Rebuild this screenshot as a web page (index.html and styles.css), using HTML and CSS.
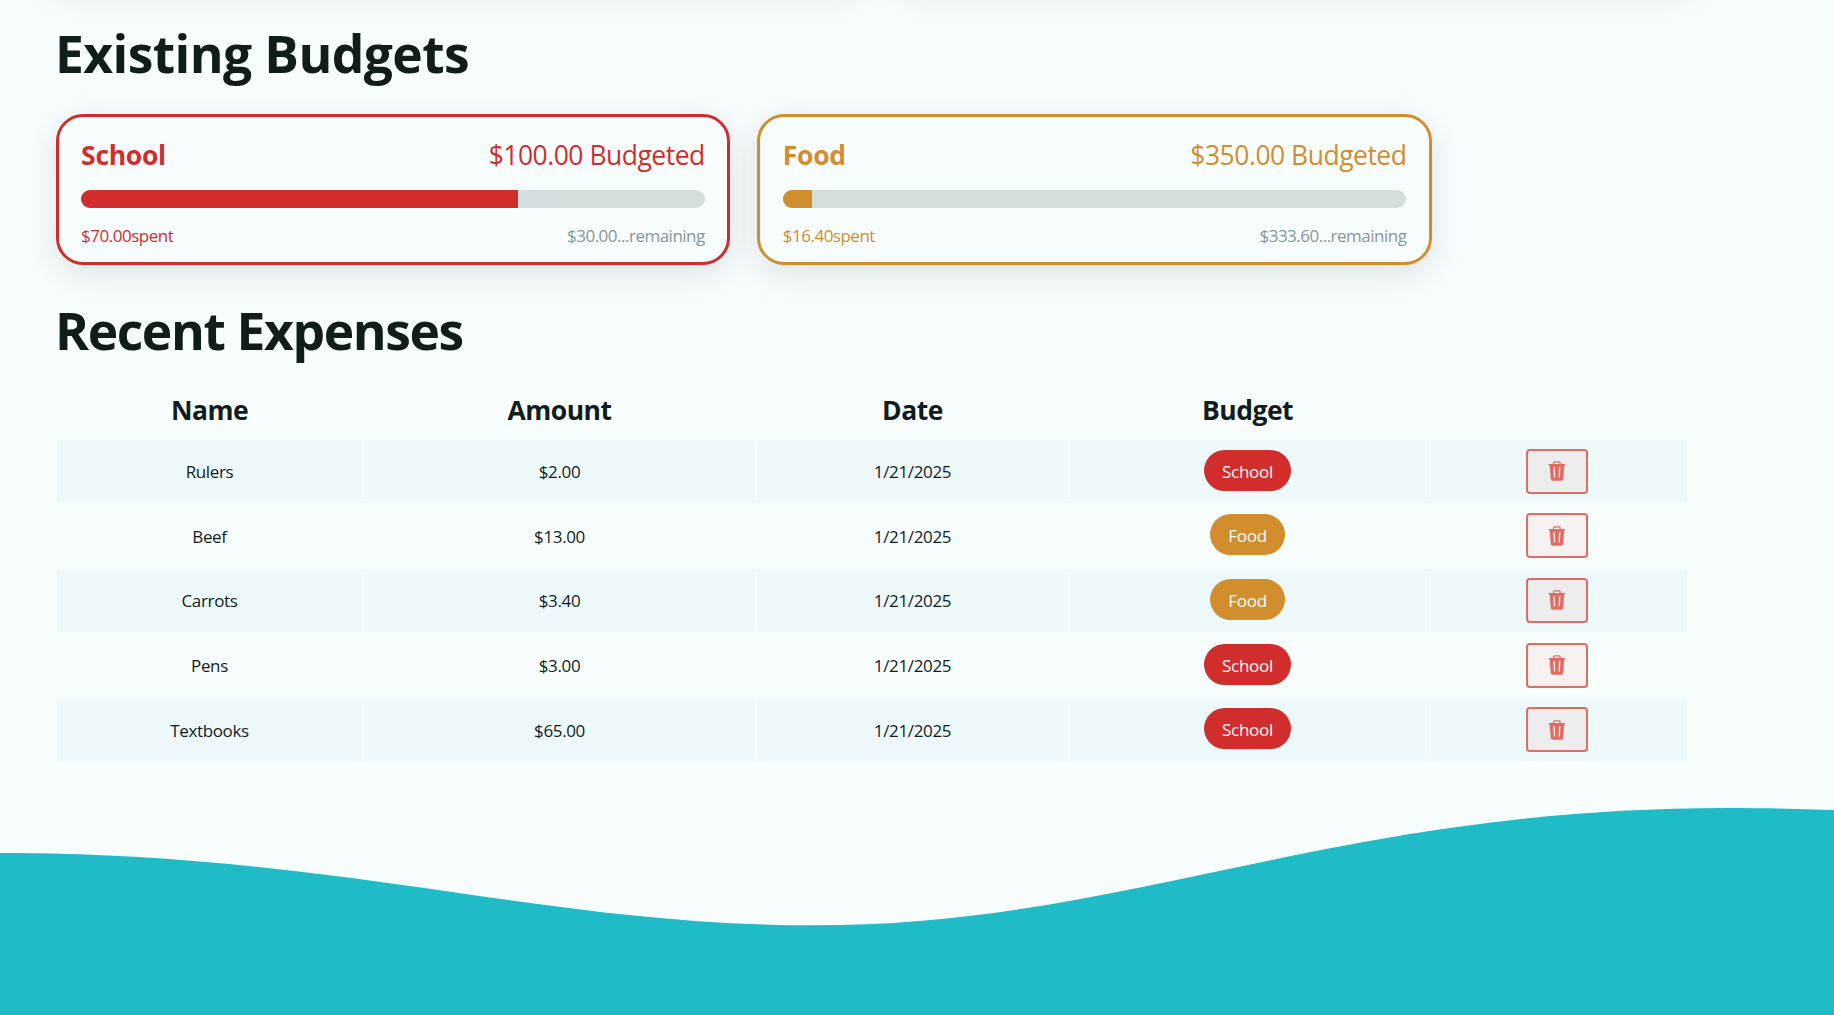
FILE: index.html
```html
<!DOCTYPE html>
<html lang="en">
<head>
<meta charset="utf-8">
<title>Budgets</title>
<link rel="stylesheet" href="styles.css">
</head>
<body>
<svg width="0" height="0" class="sprite" aria-hidden="true">
  <symbol id="trash" viewBox="0 0 18 20">
    <path fill-rule="evenodd" d="M4.9 3V2Q4.9.2 6.7.2H11Q12.8.2 12.8 2V3H17V4.5H16.2L15.300 17.800Q15.200 19.800 13.300 19.800H4.700Q2.800 19.800 2.700 17.800L1.700 4.500H.700V3ZM6.200 3H11.500V2.200Q11.500 1.500 10.800 1.500H6.900Q6.200 1.500 6.200 2.200ZM5.400 6L5.900 16.500H7.200L6.800 6ZM11 6L10.600 16.500H11.900L12.400 6Z"/>
  </symbol>
</svg>
<main class="page">
  <div class="forms"><div class="form-card"></div><div class="form-card"></div></div>
  <h2 class="heading heading-budgets">Existing Budgets</h2>
  <div class="budgets">
    <section class="budget red">
      <div class="row title"><h3>School</h3><p>$100.00 Budgeted</p></div>
      <div class="bar"><div class="fill" style="width:70%"></div></div>
      <div class="row small"><span>$70.00spent</span><span class="muted">$30.00...remaining</span></div>
    </section>
    <section class="budget orange">
      <div class="row title"><h3>Food</h3><p>$350.00 Budgeted</p></div>
      <div class="bar"><div class="fill" style="width:4.69%"></div></div>
      <div class="row small"><span>$16.40spent</span><span class="muted">$333.60...remaining</span></div>
    </section>
  </div>
  <h2 class="heading heading-expenses">Recent Expenses</h2>
  <table class="expenses">
    <colgroup><col class="c1"><col class="c2"><col class="c3"><col class="c4"><col class="c5"></colgroup>
    <thead><tr><th>Name</th><th>Amount</th><th>Date</th><th>Budget</th><th></th></tr></thead>
    <tbody>
      <tr><td>Rulers</td><td>$2.00</td><td>1/21/2025</td><td><a class="pill red">School</a></td><td><button class="delete" aria-label="Delete"><svg><use href="#trash"/></svg></button></td></tr>
      <tr><td>Beef</td><td>$13.00</td><td>1/21/2025</td><td><a class="pill orange">Food</a></td><td><button class="delete" aria-label="Delete"><svg><use href="#trash"/></svg></button></td></tr>
      <tr><td>Carrots</td><td>$3.40</td><td>1/21/2025</td><td><a class="pill orange">Food</a></td><td><button class="delete" aria-label="Delete"><svg><use href="#trash"/></svg></button></td></tr>
      <tr><td>Pens</td><td>$3.00</td><td>1/21/2025</td><td><a class="pill red">School</a></td><td><button class="delete" aria-label="Delete"><svg><use href="#trash"/></svg></button></td></tr>
      <tr><td>Textbooks</td><td>$65.00</td><td>1/21/2025</td><td><a class="pill red">School</a></td><td><button class="delete" aria-label="Delete"><svg><use href="#trash"/></svg></button></td></tr>
    </tbody>
  </table>
</main>
<svg class="wave" viewBox="0 800 1834 215" preserveAspectRatio="none" aria-hidden="true">
  <path d="M0 853C340 853 540 925.300 813.500 925.300C1130 925.300 1330 808 1728 808C1765 808 1800 809 1834 810V1015H0Z"/>
</svg>
</body>
</html>
```
FILE: styles.css
```css
* { box-sizing: border-box; margin: 0; }

body {
  display: flex;
  flex-direction: column;
  height: 1015px;
  overflow: hidden;
  background: #f8fefe;
  color: #111c1c;
  font-family: "Open Sans", "Noto Sans", sans-serif;
  font-size: 17px;
}

.sprite { position: absolute; }
.page { flex: none; padding: 0 55px; height: 800px; }

.forms { display: grid; grid-template-columns: 807px 1fr; gap: 36px; width: 1634px; height: 40px; margin-top: -54px; }
.form-card { border-radius: 27px; }

.form-card,
.budget { box-shadow: 0 9px 34px rgba(30, 30, 60, .12); }

.heading { width: max-content; font-size: 51.600px; font-weight: 700; line-height: 60px; white-space: nowrap; }
.heading-budgets { margin: 37px 0 0 0; letter-spacing: -.6px; }
.heading-expenses { margin: 35px 0 0 0; letter-spacing: -1.400px; }

.red { --accent: #d22d2d; }
.orange { --accent: #d28d2d; }

.budgets { display: flex; gap: 27px; margin: 31px 0 0 .6px; }
.budget {
  width: 674.7px;
  height: 151px;
  padding: 20.500px 22.500px 0;
  border: 3px solid var(--accent);
  border-radius: 27px;
  background: #f8fefe;
  color: var(--accent);
}
.row { display: flex; justify-content: space-between; white-space: nowrap; }
.title { font-size: 26.500px; line-height: 34px; }
.title h3 { font-size: inherit; font-weight: 700; letter-spacing: -.3px; }
.title p { letter-spacing: -.5px; }
.bar { height: 18px; margin-top: 18.500px; border-radius: 9px; background: #d3dede; overflow: hidden; }
.fill { height: 100%; background: var(--accent); }
.small { margin-top: 16px; line-height: 24px; letter-spacing: -.5px; }
.muted { color: #85979a; }

.expenses { width: 1634px; margin-top: 17px; border-spacing: 2px; table-layout: fixed; text-align: center; }
.c1 { width: 305px; }
.c2 { width: 391px; }
.c3 { width: 311px; }
.c4 { width: 355px; }
.c5 { width: 260px; }
th { height: 59px; padding: 3px 0 0; font-size: 26.500px; line-height: 34px; letter-spacing: -.5px; }
td { height: 62.600px; padding: 2px 0 0; vertical-align: middle; letter-spacing: -.35px; line-height: 24px; }
td:nth-child(4),
td:nth-child(5) { padding: 0; letter-spacing: -.25px; }
tbody tr:nth-child(odd) td { background: #eef9fb; }

.pill {
  display: inline-block;
  height: 41px;
  margin-bottom: 2px;
  padding: 1px 18px 0;
  border-radius: 20.500px;
  background: var(--accent);
  color: #f8fefe;
  line-height: 41px;
  vertical-align: middle;
}
.delete {
  display: inline-flex;
  align-items: center;
  justify-content: center;
  width: 62px;
  height: 45px;
  padding: 0;
  border: 2px solid #e26b63;
  border-radius: 4px;
  background: rgba(226, 50, 30, .06);
  color: #e26b63;
  vertical-align: middle;
}
.delete svg { width: 18px; height: 20px; fill: currentColor; }

.wave { display: block; flex: none; width: 100%; height: 215px; fill: #1fbbc7; }
```
